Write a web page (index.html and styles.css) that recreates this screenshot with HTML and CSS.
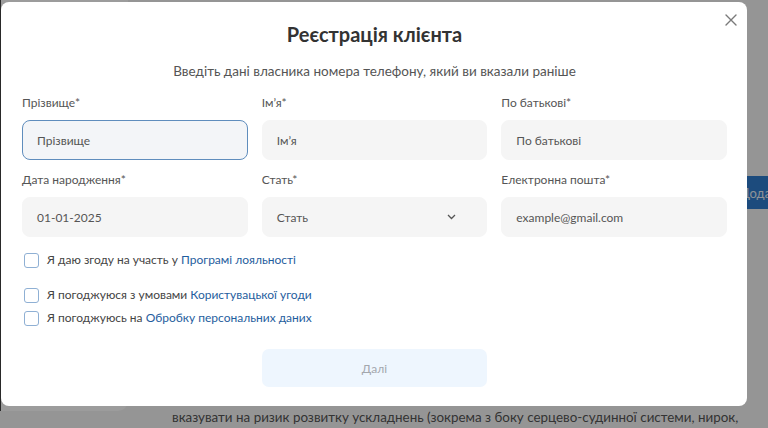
FILE: index.html
```html
<!DOCTYPE html>
<html lang="uk">
<head>
<meta charset="utf-8">
<title>Реєстрація клієнта</title>
<link rel="stylesheet" href="styles.css">
</head>
<body>
<div class="page">
  <div class="page-side"></div>
  <div class="page-main">
    <div class="page-actions"><button class="page-btn">Додати</button></div>
    <p class="page-text">вказувати на ризик розвитку ускладнень (зокрема з боку серцево-судинної системи, нирок,</p>
  </div>
</div>
<div class="overlay">
  <div class="modal">
    <button class="close" aria-label="Закрити">
      <svg width="12" height="12" viewBox="0 0 12 12"><path d="M1 1L11 11M11 1L1 11" stroke="#7a7a7a" stroke-width="1.4" stroke-linecap="round"/></svg>
    </button>
    <h1 class="title">Реєстрація клієнта</h1>
    <p class="subtitle">Введіть дані власника номера телефону, який ви вказали раніше</p>
    <div class="grid">
      <label class="field"><span class="label">Прізвище*</span><span class="input focused">Прізвище</span></label>
      <label class="field"><span class="label">Ім’я*</span><span class="input">Ім’я</span></label>
      <label class="field"><span class="label">По батькові*</span><span class="input">По батькові</span></label>
      <label class="field"><span class="label">Дата народження*</span><span class="input">01-01-2025</span></label>
      <label class="field"><span class="label">Стать*</span><span class="input select">Стать<svg width="9" height="6" viewBox="0 0 9 6"><path d="M1 1L4.5 4.5L8 1" fill="none" stroke="#555" stroke-width="1.3"/></svg></span></label>
      <label class="field"><span class="label">Електронна пошта*</span><span class="input">example@gmail.com</span></label>
    </div>
    <div class="checks">
      <label class="check first"><span class="box"></span>Я даю згоду на участь у&nbsp;<a>Програмі лояльності</a></label>
      <label class="check second"><span class="box"></span>Я погоджуюся з умовами&nbsp;<a>Користувацької угоди</a></label>
      <label class="check third"><span class="box"></span>Я погоджуюсь на&nbsp;<a>Обробку персональних даних</a></label>
    </div>
    <div class="actions"><button class="next">Далі</button></div>
  </div>
</div>
</body>
</html>
```
FILE: styles.css
```css
* { box-sizing: border-box; }
html, body { margin: 0; height: 100%; }
body {
  font-family: Lato, "Noto Sans", sans-serif;
  background: #f4f4f4;
  overflow: hidden;
  position: relative;
}
.page {
  display: flex;
  height: 428px;
}
.page-side {
  width: 128px;
  height: 411px;
  background: #ffffff;
  border-radius: 0 0 10px 0;
  border-left: 1px solid #444;
}
.page-main {
  flex: 1;
  display: flex;
  flex-direction: column;
  padding-top: 176px;
}
.page-actions {
  display: flex;
  justify-content: flex-end;
  margin-right: -27px;
}
.page-btn {
  background: #2f7bcc;
  color: #e6eef7;
  border: 0;
  font: 13px Lato, sans-serif;
  height: 33px;
  padding: 0 10px 0 0;
}
.page-text {
  margin: 200px 0 0 44px;
  font-size: 13.4px;
  color: #555;
  white-space: nowrap;
}
.overlay {
  position: absolute;
  inset: 0;
  background: rgba(0, 0, 0, 0.39);
}
.modal {
  position: absolute;
  left: 1px;
  top: 2px;
  width: 746px;
  height: 404px;
  background: #fff;
  border-radius: 8px;
  padding: 20px 20px 0 21px;
  color: #444;
}
.close {
  position: absolute;
  top: 11px;
  right: 9px;
  width: 14px;
  height: 14px;
  padding: 1px;
  border: 0;
  background: none;
  display: flex;
}
.title {
  margin: 0;
  text-align: center;
  font-size: 20px;
  line-height: 24px;
  font-weight: 700;
  color: #333;
}
.subtitle {
  margin: 16px 0 0;
  text-align: center;
  font-size: 13.5px;
  line-height: 18px;
  color: #555;
}
.grid {
  margin-top: 15px;
  display: grid;
  grid-template-columns: repeat(3, 1fr);
  column-gap: 14px;
  row-gap: 12px;
}
.field {
  display: flex;
  flex-direction: column;
  gap: 9px;
}
.label {
  font-size: 12px;
  line-height: 16px;
  color: #555;
}
.input {
  height: 40px;
  border-radius: 8px;
  background: #f5f5f5;
  padding: 0 14px;
  display: flex;
  align-items: center;
  justify-content: space-between;
  font-size: 12px;
  color: #555;
  border: 1px solid #f5f5f5;
}
.input.focused {
  background: #f3f5f8;
  border-color: #5f8dbd;
}
.select svg { margin-right: 16px; }
.checks {
  margin-top: 14px;
  display: flex;
  flex-direction: column;
  padding-left: 2px;
}
.check {
  display: flex;
  align-items: center;
  font-size: 12px;
  line-height: 18px;
  color: #444;
}
.check.second { margin-top: 17px; }
.check.third { margin-top: 5px; }
.check a { color: #1f5e9e; }
.box {
  width: 15px;
  height: 15px;
  border: 1.3px solid #8fb0d4;
  border-radius: 3px;
  margin-right: 8px;
  background: #fff;
}
.actions {
  margin-top: 22px;
  display: grid;
  grid-template-columns: repeat(3, 1fr);
  column-gap: 14px;
}
.next {
  grid-column: 2;
  height: 38px;
  border: 0;
  border-radius: 7px;
  background: #eef6fe;
  color: #a3a7ad;
  font: 12px Lato, sans-serif;
}
```
